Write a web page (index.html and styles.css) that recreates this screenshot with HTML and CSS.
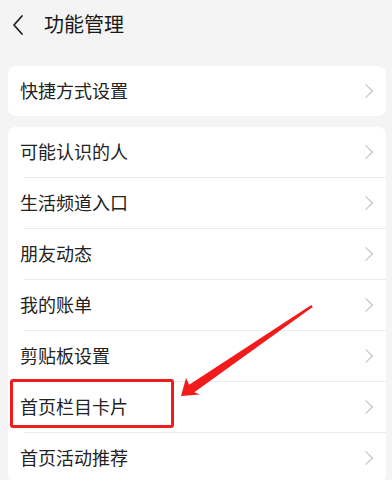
FILE: index.html
```html
<!DOCTYPE html>
<html lang="zh-CN">
<head>
    <meta charset="UTF-8">
    <meta name="viewport" content="width=device-width, initial-scale=1.0">
    <title>功能管理</title>
    <link rel="stylesheet" href="styles.css">
</head>
<body>
    <div class="header">
        <svg class="back" width="14" height="22" viewBox="0 0 14 22">
            <path d="M11 2 L3 11 L11 20" fill="none" stroke="#222" stroke-width="1.8" stroke-linecap="round" stroke-linejoin="round"/>
        </svg>
        <h1>功能管理</h1>
    </div>

    <div class="card">
        <div class="row"><span>快捷方式设置</span><i class="chev"></i></div>
    </div>

    <div class="card">
        <div class="row"><span>可能认识的人</span><i class="chev"></i></div>
        <div class="row"><span>生活频道入口</span><i class="chev"></i></div>
        <div class="row"><span>朋友动态</span><i class="chev"></i></div>
        <div class="row"><span>我的账单</span><i class="chev"></i></div>
        <div class="row"><span>剪贴板设置</span><i class="chev"></i></div>
        <div class="row"><span>首页栏目卡片</span><i class="chev"></i></div>
        <div class="row"><span>首页活动推荐</span><i class="chev"></i></div>
    </div>

    <!-- annotation overlay -->
    <div class="mark-box"></div>
    <svg class="mark-arrow" width="392" height="480" viewBox="0 0 392 480">
        <polygon points="181,396 186,378 189.2,384.8 311.3,305 312.7,307 194.3,392.2 200,394.5" fill="#f21a1a"/>
    </svg>
</body>
</html>
```

FILE: styles.css
```css
* {
    margin: 0;
    padding: 0;
    box-sizing: border-box;
}

body {
    background: #f4f4f4;
    font-family: 'Noto Sans CJK SC', 'Noto Sans', sans-serif;
    color: #222;
    padding: 0 6px 0 8px;
    height: 480px;
    overflow: hidden;
    position: relative;
}

.header {
    height: 50px;
    display: flex;
    align-items: center;
    padding-bottom: 3px;
}

.back {
    margin-left: 3px;
    margin-top: 3px;
}

.header h1 {
    font-size: 20px;
    font-weight: normal;
    color: #1a1a1a;
    margin-left: 19px;
}

.card {
    background: #fff;
    border-radius: 8px;
    margin-top: 16px;
    overflow: hidden;
}

.card + .card {
    margin-top: 11px;
}

.row {
    height: 50px;
    display: flex;
    align-items: center;
    justify-content: space-between;
    padding: 0 15px 3px 12px;
    font-size: 18px;
    position: relative;
}

.row + .row {
    height: 51px;
    padding-top: 1px;
}

.row + .row::before {
    content: '';
    position: absolute;
    top: 0;
    left: 16px;
    right: 0;
    height: 1px;
    background: #ebebeb;
}

.chev {
    width: 10px;
    height: 10px;
    margin-top: 3px;
    border-top: 1.4px solid #bdbdbd;
    border-right: 1.4px solid #bdbdbd;
    transform: rotate(45deg);
}

.mark-box {
    position: absolute;
    left: 10px;
    top: 379px;
    width: 164px;
    height: 49px;
    border: 3px solid #f01c1c;
    border-radius: 3px;
}

.mark-arrow {
    position: absolute;
    left: 0;
    top: 0;
}
```
